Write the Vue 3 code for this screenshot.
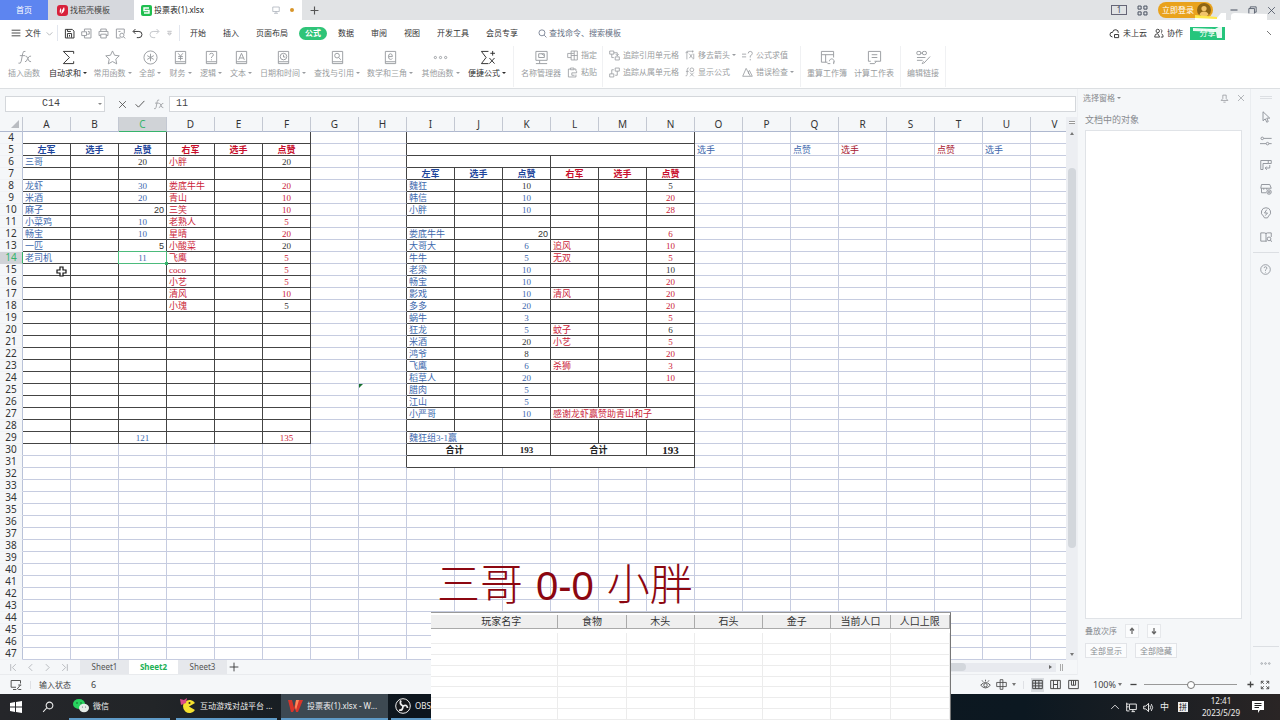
<script setup>
import { h, ref } from 'vue'

const shapes = {
  burger: 'M1 3.5H15M1 8H15M1 12.5H15',
  down: 'M3 6L8 11L13 6',
  up: 'M2 11L8 5L14 11',
  save: 'M2 2H12L14.500 4.500V14.500H2ZM5 14V8H11V14M5 2V5H10M8 10V12.500',
  exportPdf: 'M5 1.500H14.500V14.500H5M5 1.500V5M5 11V14.500M1 5.500H8V11H1ZM10 5H12V9H9',
  print: 'M4 5V1.500H12V5M4 11H1.500V5H14.500V11H12M4 9H12V14.500H4Z',
  preview: 'M13.500 8V1.500H2V14.500H8M10 7.500A3 3 0 1 0 10 13.500A3 3 0 1 0 10 7.500M12.300 12.800L15 15M5 5H8',
  undo: 'M5 1.500L1.500 5L5 8.500M2 5H10A4 4 0 0 1 10 14H7',
  redo: 'M11 1.500L14.500 5L11 8.500M14 5H6A4 4 0 0 0 6 14H9',
  more: 'M3 3H13M4 7L8 12L12 7Z',
  search: 'M7 1.500A5.300 5.300 0 1 0 7 12.100A5.300 5.300 0 1 0 7 1.500M11 11L15 15',
  searchLeft: 'M10 1.500A4.500 4.500 0 1 0 10 10.500A4.500 4.500 0 1 0 10 1.500M6.500 9L1.500 14.500',
  fx: 'M9 1.500Q6.500 .5 6 4L4.500 12Q4 15 1.500 14M3 6H8.500M9 6.500Q10.500 6 11.500 9Q12.500 13 15 12.500M15 6.500Q13 6 11.500 9Q10 13 8.500 12.500',
  sum: 'M13.500 4V1.500H2.500L9 8L2.500 14.500H13.500V12',
  star: 'M8 1L10.200 5.600L15.200 6.200L11.500 9.700L12.500 14.800L8 12.300L3.500 14.800L4.500 9.700L.8 6.200L5.800 5.600Z',
  all: 'M8 1A7 7 0 1 0 8 15A7 7 0 1 0 8 1M8 4V12M4.500 6L11.500 10M11.500 6L4.500 10',
  money: 'M2.500 1.500H13.500V14.500H2.500ZM2.500 12.500H13.500M5.500 3.500L8 6.500L10.500 3.500M8 6.500V11M5.500 7H10.500M5.500 9H10.500',
  logic: 'M2.500 1.500H13.500V14.500H2.500ZM2.500 12.500H13.500M6 5Q6 3.500 8 3.500T10 5Q10 6.500 8 7.500V8.500M8 10V11',
  textFn: 'M2.500 1.500H13.500V14.500H2.500ZM2.500 12.500H13.500M5 10.500L8 3.500L11 10.500M6 8.500H10',
  clock: 'M2.500 1.500H13.500V14.500H2.500ZM2.500 12.500H13.500M8 3.500A3.500 3.500 0 1 0 8 10.500A3.500 3.500 0 1 0 8 3.500M8 5V7.500H10',
  lookup: 'M2.500 1.500H13.500V14.500H2.500ZM2.500 12.500H13.500M7.500 3.500A2.500 2.500 0 1 0 7.500 8.500A2.500 2.500 0 1 0 7.500 3.500M9.300 8L11.500 10.500',
  math: 'M2.500 1.500H13.500V14.500H2.500ZM2.500 12.500H13.500M6 7H10Q10 4 8 4Q5.800 4 5.800 7T8 10Q9.500 10 10 9',
  dots: 'M2.500 6.800A1.200 1.200 0 1 0 2.500 9.200A1.200 1.200 0 1 0 2.500 6.800M8 6.800A1.200 1.200 0 1 0 8 9.200A1.200 1.200 0 1 0 8 6.800M13.500 6.800A1.200 1.200 0 1 0 13.500 9.200A1.200 1.200 0 1 0 13.500 6.800',
  quick: 'M9 1.500H1.500L6.500 8L1.500 14.500H9M11 3.500H16M13.500 1V6M10 8.500L15.500 14.500M15.500 8.500L10 14.500',
  manager: 'M2 1.500H14V11H2ZM5 4H11V8H5ZM2 14.500H14M6 11V14.500M8 4L11 6',
  assign: 'M1 5H6V14.500H15V1.500H6V5M6 8H15M10.500 1.500V14.500M1 5V11H6M6 5H10',
  paste: 'M5 3H2V14.500H13V11M5 1.500H10V4H5ZM10 3H13V6M7 8.500H14V6M7 8.500V12H11',
  precedent: 'M1 1.500H7V6H1ZM9 10H15V14.500H9ZM4 6V11H7M7 4H12V8M10 6L12 8.500L14 6',
  dependent: 'M9 1.500H15V6H9ZM1 10H7V14.500H1ZM12 6V12H9M4 10V4H7',
  removeArrow: 'M3 15V3M1 5L3 2.500L5 5M3 2H14M12 1V4M7 6L12 13M12 6L7 13M14 6V14H12',
  showFx: 'M6 1.500Q4 1 3.500 4V12Q3 15 1 14M1.500 7H6M11 1.500A3 3 0 1 0 11 7.500A3 3 0 1 0 11 1.500M8 9L14 15M14 9L8 15',
  evalFx: 'M0 6H6M0 10H6M9 5Q9 2 12 2T15 5Q15 7 12 8.500V11M12 13V15',
  warn: 'M6 2L1 13.500H15L10.500 4.500M6 2L12 13M9.500 6V10',
  recalc: 'M14.500 8V1.500H1.500V13H8M1.500 5H14.500M6 5V13M10 12A2.500 2.500 0 1 1 14.500 13.500M14.500 15L15 12M8 14.500H11',
  calcSheet: 'M4 12H1.500V1.500H14.500V12H8M5 5H11M5 8H11M3 14.500H8L10 12',
  editLink: 'M3 1.500A1.800 1.800 0 1 0 3 5A1.800 1.800 0 1 0 3 1.500M9 1.500A1.800 1.800 0 1 0 9 5A1.800 1.800 0 1 0 9 1.500M4.500 3.300H7.500M1 8H10M1 11H7M8 14.500L15 7M6.500 15L8 12',
  cloud: 'M5 13Q1 12.500 1.500 9T5 6.500Q6 2 10 2.500T13.500 7M8 9.500H14V14H8Z',
  people: 'M6 2A2.700 2.700 0 1 0 6 7.500A2.700 2.700 0 1 0 6 2M1 14.500Q1 9 6 9L9 14.500ZM11 2Q14 4 12 7.500M12 9Q15 11 14.500 14.500H11',
  close: 'M2 2L14 14M14 2L2 14',
  check: 'M1 8.500L5.500 13L15 3',
  plus: 'M8 1V15M1 8H15',
  minus: 'M1 8H15',
  restore: 'M4 4V1.500H14.500V11H12M1.500 4.500H11.500V14.500H1.500Z',
  pin: 'M5 2H11V8L14 11.500H2L5 8ZM6 14.500H10',
  pointer: 'M4 1L13 9.500H9L11 14L9 15L7 10.500L4 13Z',
  sliders: 'M5 4.500H15.500M3 2.800A1.700 1.700 0 1 0 3 6.200A1.700 1.700 0 1 0 3 2.800M0 11.500H8M10 9.800A1.700 1.700 0 1 0 10 13.200A1.700 1.700 0 1 0 10 9.800M12 11.500H15.500',
  route: 'M1 2H15V6H11M1 2V14H4V6H11V2M13 8V12H7M9 10L7 12L9 14.500',
  store: 'M2 2H13L15 7H1ZM2 7V13H8M5 7V9M9 7V9M12 9A3 3 0 1 0 12 15A3 3 0 1 0 12 9M12 10V14M10 12H14',
  bulb: 'M8 1A6 6 0 0 0 4.500 12L6 14.500H10L11.500 12A6 6 0 0 0 8 1M9 3.500L6 8H10L7 11.500',
  book: 'M8 3V14M1 2.500H6Q8 2.500 8 4Q8 2.500 10 2.500H15V8M1 2.500V13.500H9M12 8A2.500 2.500 0 1 0 12 13A2.500 2.500 0 1 0 12 8M14 12L15.500 14.500',
  help: 'M8 1A7 7 0 1 0 8 15A7 7 0 1 0 8 1M6 6Q6 4 8 4T10 6Q10 7.500 8 8.500V10M8 11.500V12.500',
  monitor: 'M1.500 2H14.500V11H1.500ZM4 14.500H12M8 11V14.500',
  left: 'M11 2L5 8L11 14',
  right: 'M5 2L11 8L5 14',
  first: 'M3 2V14M12 2L6 8L12 14',
  last: 'M13 2V14M4 2L10 8L4 14',
  screenFx: 'M14 6V2H1.500V11H8M4 14H8M9 14L14 8M11 8H15M11 14H15',
  eye: 'M1 9Q8 1 15 9Q8 17 1 9M8 6.500A2.500 2.500 0 1 0 8 11.500A2.500 2.500 0 1 0 8 6.500M8 1V3.500M3 2L4.500 4M13 2L11.500 4',
  cross: 'M1 5H15V11H1ZM6 1H10V15H6Z',
  normal: 'M1 2H15V14H1ZM1 6H15M1 10H15M5 2V14M10 2V14',
  page: 'M1 2H15V14H1ZM5 2V14M11 2V14M5 8H11',
  brk: 'M1 14V2H15V14H1M5 2V9H11V2M8 2V9',
  full: 'M6 2H2V6M2 2L6 6M10 2H14V6M14 2L10 6M6 14H2V10M2 14L6 10M10 14H14V10M14 14L10 10',
  arrowUp: 'M8 14V3M4 7L8 2.500L12 7',
  arrowDown: 'M8 2V13M4 9L8 13.500L12 9',
  network: 'M5 3H15V11H5ZM8 14H13M10 11V14M1 1V13M1 3H4M1 7H4M1 13H5',
  sound: 'M1 6H4L8 2V14L4 10H1ZM10 5Q12 8 10 11M12 3Q16 8 12 13',
  apps: 'M1.500 1.500H6V6H1.500ZM10 1.500H14.500V6H10ZM1.500 10H6V14.500H1.500ZM10 10H14.500V14.500H10Z'
}

const Icon = ({ name, size = 10, w = 1.4 }) =>
  h('svg', { width: size, height: size, viewBox: '0 0 16 16', fill: 'none', stroke: 'currentColor', 'stroke-width': w, 'aria-hidden': 'true' },
    [h('path', { d: shapes[name] })])
Icon.props = ['name', 'size', 'w']

const menus = ['开始', '插入', '页面布局', '公式', '数据', '审阅', '视图', '开发工具', '会员专享']
const quick = [['save', 'on'], ['exportPdf', ''], ['print', ''], ['preview', ''], ['undo', 'on'], ['redo', 'off']]
const functions = [
  ['fx', '插入函数', false], ['sum', '自动求和', true, 'on'], ['star', '常用函数', true], ['all', '全部', true],
  ['money', '财务', true], ['logic', '逻辑', true], ['textFn', '文本', true], ['clock', '日期和时间', true],
  ['lookup', '查找与引用', true], ['math', '数学和三角', true], ['dots', '其他函数', true], ['quick', '便捷公式', true, 'on']
]
const sideIcons = ['pointer', 'sliders', 'route', 'store', 'bulb', 'book']

const letters = 'ABCDEFGHIJKLMNOPQRSTUV'.split('')
const cells = {}
const put = (key, t, c = '') => { cells[key] = { t, c } }

function heads(row, start) {
  const i = letters.indexOf(start)
  ;['左军', '选手', '点赞', '右军', '选手', '点赞'].forEach((t, n) => put(letters[i + n] + row, t, n < 3 ? 'hb' : 'hr'))
}
heads(5, 'A')
heads(7, 'I')

// row, left name, left votes, right name, right votes; votes may carry a class after a colon
const left = [
  [6, '三哥', '20:ink', '小胖', '20:ink'], [8, '龙虾', '30', '娄底牛牛', '20'], [9, '米酒', '20', '青山', '10'],
  [10, '麻子', '20:num', '三笑', '10'], [11, '小菜鸡', '10', '老熟人', '5'], [12, '畅宝', '10', '星晴', '20'],
  [13, '一匹', '5:num', '小酸菜', '20:ink'], [14, '老司机', '11', '飞鹰', '5'], [15, '', '', 'coco', '5'],
  [16, '', '', '小艺', '5'], [17, '', '', '清风', '10'], [18, '', '', '小瑰', '5:ink'], [29, '', '121', '', '135']
]
const right = [
  [8, '魏狂', '10:ink', '', '5:ink'], [9, '韩信', '10', '', '20'], [10, '小胖', '10', '', '28'],
  [12, '娄底牛牛', '20:num', '', '6'], [13, '大哥大', '6', '追风', '10'], [14, '牛牛', '5', '无双', '5'],
  [15, '老梁', '10', '', '10:ink'], [16, '畅宝', '10', '', '20'], [17, '影戏', '10', '清风', '20'],
  [18, '多多', '20', '', '20'], [19, '蜗牛', '3', '', '5'], [20, '狂龙', '5', '蚊子', '6:ink'],
  [21, '米酒', '20:ink', '小艺', '5'], [22, '鸿爷', '8:ink', '', '20'], [23, '飞鹰', '6', '杀狮', '3'],
  [24, '稻草人', '20', '', '10'], [25, '腊肉', '5', '', ''], [26, '江山', '5', '', ''],
  [27, '小严哥', '10', '感谢龙虾赢赞助青山和子', ''], [29, '魏狂组3-1赢', '', '', '']
]
function fill(list, cols) {
  for (const [row, ...vals] of list) {
    vals.forEach((v, n) => {
      if (!v) return
      const [t, extra] = v.split(':')
      const tone = extra || (n < 2 ? 'blue' : 'red')
      put(cols[n] + row, t, n % 2 ? 'mid ' + tone : tone)
    })
  }
}
fill(left, ['A', 'C', 'D', 'F'])
fill(right, ['I', 'K', 'L', 'N'])
put('I30', '合计', 'tot'); put('K30', '193', 'tot'); put('L30', '合计', 'tot'); put('N30', '193', 'tot wide')
put('O5', '选手', 'sans blue'); put('Q5', '点赞', 'sans blue'); put('R5', '选手', 'sans dred')
put('T5', '点赞', 'sans dred'); put('U5', '选手', 'sans blue')

const spans = { A4: 3, D4: 3, I4: 6, I5: 6, I6: 3, L6: 3, L27: 3, I29: 2, I30: 2, L30: 2, I31: 6 }

const rows = []
for (let r = 4; r <= 47; r++) {
  const list = []
  for (let i = 0; i < letters.length;) {
    const key = letters[i] + r
    const span = spans[key] || 1
    const last = i + span - 1
    const inLeft = i <= 5 && r <= 29
    const inRight = i >= 8 && i <= 13 && r <= 31
    const cell = cells[key] || { t: '', c: '' }
    const edge = inLeft || inRight || (last === 7 && r <= 31)
    list.push({
      key, span, t: cell.t,
      c: [cell.c, edge ? 'er' : '', inLeft || inRight ? 'eb' : '']
    })
    i += span
  }
  rows.push({ r, list })
}

const players = ['玩家名字', '食物', '木头', '石头', '金子', '当前人口', '人口上限']
const zoom = ref(50)
const name = ref('C14')
const formula = ref('11')
</script>

<template>
  <div class="app">
    <header class="title">
      <button class="tab home">首页</button>
      <button class="tab docer">
        <svg width="11" height="11" viewBox="0 0 11 11"><rect width="11" height="11" rx="3" fill="#d8213b" /><path d="M3 8.500Q2 5 4 3Q5 6 3 8.500M4 9Q4.500 5 7 2Q9 6 4 9" fill="#fff" /></svg>
        找稻壳模板
      </button>
      <button class="tab file">
        <svg width="11" height="11" viewBox="0 0 11 11"><rect width="11" height="11" rx="2" fill="#1fbf4f" /><path d="M8 3H3V5.500H8V8H3" fill="none" stroke="#fff" stroke-width="1.400" /></svg>
        <span>投票表(1).xlsx</span>
        <Icon class="mon" name="monitor" size="8" />
        <i class="dot"></i>
      </button>
      <button class="add" aria-label="新建"><Icon name="plus" size="9" w="2" /></button>
      <div class="win">
        <span class="one">1</span>
        <Icon name="apps" size="11" />
        <button class="login">立即登录
          <svg width="14" height="14" viewBox="0 0 14 14"><circle cx="7" cy="7" r="7" fill="#8d6414" /><circle cx="7" cy="5.500" r="2.600" fill="#f2c46a" /><path d="M2.500 12Q3 8.500 7 8.500T11.500 12Q7 15 2.500 12" fill="#f2c46a" /></svg>
        </button>
        <button aria-label="最小化"><Icon name="minus" size="8" w="2" /></button>
        <button aria-label="还原"><Icon name="restore" size="9" /></button>
        <button aria-label="关闭"><Icon name="close" size="9" /></button>
      </div>
    </header>

    <nav class="menu">
      <button class="filebtn"><Icon name="burger" size="10" />文件<Icon class="pale" name="down" size="9" /></button>
      <div class="quick">
        <button v-for="q in quick" :key="q[0]" :class="q[1]" :aria-label="q[0]"><Icon :name="q[0]" size="11" /></button>
        <button aria-label="更多"><Icon name="more" size="7" /></button>
      </div>
      <div class="items">
        <button v-for="m in menus" :key="m" :class="{ active: m === '公式' }">{{ m }}</button>
      </div>
      <label class="find"><Icon name="search" size="9" /><input aria-label="查找" placeholder="查找命令、搜索模板" /></label>
      <div class="cloud">
        <button><Icon name="cloud" size="11" />未上云</button>
        <button><Icon name="people" size="10" />协作</button>
        <button class="share">分享</button>
      </div>
      <button class="fold" aria-label="折叠"><svg width="6" height="6" viewBox="0 0 6 6"><path d="M1 1L5 5" stroke="#777" /></svg></button>
      <svg class="flare" width="90" height="34" viewBox="0 0 90 34" aria-hidden="true">
        <path d="M5 4L27 5L31 0L36 0V9H5Z" fill="#fff" />
        <path d="M5 2L27 4L27 6L5 5Z" fill="#ffe84a" />
        <path d="M41 3Q41 0 45 0L77 1V9H41Z" fill="#fff" />
        <path d="M3 15L25 16L32 12V25H27L26 19L3 18Z" fill="#fff" opacity=".9" />
      </svg>
    </nav>

    <section class="ribbon">
      <div class="fns">
        <button v-for="f in functions" :key="f[1]" class="big" :class="f[3]">
          <Icon :name="f[0]" size="15" w="1" />
          <span :class="{ drop: f[2] }">{{ f[1] }}</span>
        </button>
      </div>
      <div class="grp names">
        <button class="big"><Icon name="manager" size="15" w="1" /><span>名称管理器</span></button>
        <div class="pair">
          <button><Icon name="assign" size="11" w="1.200" />指定</button>
          <button><Icon name="paste" size="11" w="1.200" />粘贴</button>
        </div>
      </div>
      <div class="grp trace">
        <div class="pair">
          <button><Icon name="precedent" size="11" w="1.200" />追踪引用单元格</button>
          <button><Icon name="dependent" size="11" w="1.200" />追踪从属单元格</button>
        </div>
        <div class="pair">
          <button><Icon name="removeArrow" size="10" w="1.200" /><span class="drop">移去箭头</span></button>
          <button><Icon name="showFx" size="10" w="1.200" />显示公式</button>
        </div>
        <div class="pair">
          <button><Icon name="evalFx" size="11" w="1.200" />公式求值</button>
          <button><Icon name="warn" size="11" w="1.200" /><span class="drop">错误检查</span></button>
        </div>
      </div>
      <div class="grp calc">
        <button class="big"><Icon name="recalc" size="15" w="1" /><span>重算工作簿</span></button>
        <button class="big"><Icon name="calcSheet" size="15" w="1" /><span>计算工作表</span></button>
      </div>
      <div class="grp link">
        <button class="big"><Icon name="editLink" size="15" w="1" /><span>编辑链接</span></button>
      </div>
    </section>

    <main class="body">
      <section class="work">
        <div class="fbar">
          <div class="namebox"><input v-model="name" aria-label="名称框" /><i></i></div>
          <div class="ops">
            <button aria-label="取消"><Icon name="close" size="9" /></button>
            <button aria-label="输入"><Icon name="check" size="10" /></button>
            <button class="pale" aria-label="函数"><Icon name="fx" size="11" /></button>
          </div>
          <input v-model="formula" class="formula" aria-label="编辑栏" />
        </div>
        <div class="sheet">
          <div class="view">
            <table class="grid">
              <colgroup><col class="rh" /><col v-for="l in letters" :key="l" /></colgroup>
              <thead>
                <tr><th class="corner"><i></i></th><th v-for="l in letters" :key="l" :class="{ sel: l === 'C' }">{{ l }}</th></tr>
              </thead>
              <tbody>
                <tr v-for="row in rows" :key="row.r">
                  <th :class="{ sel: row.r === 14 }">{{ row.r }}</th>
                  <td v-for="d in row.list" :key="d.key" :colspan="d.span" :class="d.c">
                    {{ d.t }}
                    <i v-if="d.key === 'C14'" class="pick"></i>
                    <i v-if="d.key === 'H25'" class="flag"></i>
                    <svg v-if="d.key === 'A15'" class="cur" width="11" height="11" viewBox="0 0 11 11"><path d="M4 1H7V4H10V7H7V10H4V7H1V4H4Z" fill="#fff" stroke="#111" stroke-width="1.200" /></svg>
                  </td>
                </tr>
              </tbody>
            </table>
          </div>
          <div class="vbar"><i class="split"></i><i class="tri up"></i><i class="thumb"></i><i class="tri dn"></i></div>
        </div>
        <div class="tabs">
          <div class="nav">
            <button aria-label="第一张"><Icon name="first" size="9" /></button>
            <button aria-label="上一张"><Icon name="left" size="9" /></button>
            <button aria-label="下一张"><Icon name="right" size="9" /></button>
            <button aria-label="最后一张"><Icon name="last" size="9" /></button>
          </div>
          <button class="st">Sheet1</button>
          <button class="st on">Sheet2</button>
          <button class="st">Sheet3</button>
          <button class="plus" aria-label="新建工作表"><Icon name="plus" size="10" /></button>
          <div class="hbar"><i></i><b></b></div>
          <i class="hsplit"></i>
        </div>
      </section>

      <aside class="pane">
        <div class="phead"><span class="drop">选择窗格</span><Icon class="r" name="pin" size="9" w="1.200" /><Icon name="close" size="8" w="1.200" /></div>
        <h2>文档中的对象</h2>
        <div class="objects"></div>
        <div class="order"><span>叠放次序</span><button aria-label="上移"><Icon name="arrowUp" size="8" w="2.500" /></button><button aria-label="下移"><Icon name="arrowDown" size="8" w="2.500" /></button></div>
        <div class="show"><button>全部显示</button><button>全部隐藏</button></div>
      </aside>

      <aside class="rail">
        <i class="grip"></i>
        <button v-for="s in sideIcons" :key="s" :aria-label="s"><Icon :name="s" size="12" w="1.200" /></button>
        <hr />
        <button class="hp" aria-label="帮助"><Icon name="help" size="11" w="1.200" /></button>
        <hr class="low" />
        <button aria-label="更多"><Icon name="dots" size="11" w="1" /></button>
      </aside>
    </main>

    <footer class="status">
      <Icon name="screenFx" size="12" w="1.200" />
      <i class="sep"></i>
      <span class="mode">输入状态</span><span class="count">6</span>
      <div class="tools">
        <Icon name="eye" size="11" w="1.200" />
        <Icon name="cross" size="11" w="1.200" /><i class="tri dn"></i>
        <i class="sep"></i>
        <button class="von" aria-label="普通视图"><Icon name="normal" size="11" /></button>
        <button aria-label="页面布局"><Icon name="page" size="11" /></button>
        <button aria-label="分页预览"><Icon name="brk" size="11" /></button>
        <div class="pct"><select aria-label="缩放"><option>100%</option></select><i class="tri dn"></i></div>
        <button class="zo" aria-label="缩小"><Icon name="minus" size="7" w="3" /></button>
        <input v-model="zoom" type="range" min="0" max="100" aria-label="缩放比例" />
        <button aria-label="放大"><Icon name="plus" size="7" w="3" /></button>
        <Icon name="full" size="10" />
      </div>
    </footer>

    <footer class="task">
      <button class="start" aria-label="开始"><svg width="12" height="12" viewBox="0 0 12 12" fill="#fff"><path d="M0 2L5 1V5.600H0ZM6 1L12 0V5.600H6ZM0 6.400H5V11L0 10ZM6 6.400H12V12L6 11Z" /></svg></button>
      <button class="start" aria-label="搜索"><Icon name="searchLeft" size="12" /></button>
      <button class="app-i wx">
        <svg width="16" height="14" viewBox="0 0 16 14"><ellipse cx="6" cy="5" rx="6" ry="5" fill="#28d45e" /><ellipse cx="11" cy="9" rx="5" ry="4.200" fill="#e6ede8" /><circle cx="4" cy="4" r=".8" fill="#175c2d" /><circle cx="8" cy="4" r=".8" fill="#175c2d" /><circle cx="9.500" cy="8" r=".6" fill="#667" /><circle cx="12.500" cy="8" r=".6" fill="#667" /></svg>
        微信
      </button>
      <button class="app-i">
        <svg width="16" height="16" viewBox="0 0 16 16"><path d="M15 5A6.500 6.500 0 1 0 15 12L9 8.500Z" fill="#f5e12f" /><circle cx="9.500" cy="5" r="1" fill="#222" /><path d="M0 1L4 2L7 0L6 5L1 7Z" fill="#d94a86" /></svg>
        互动游戏对战平台 ...
      </button>
      <button class="app-i on">
        <svg width="15" height="12" viewBox="0 0 15 12"><path d="M0 0H4L6 8L8 0H15L10 12H8L7 8L5 12H3Z" fill="#d8352a" /><path d="M8 0H11L8 10L7 7Z" fill="#ff8a5c" /></svg>
        投票表(1).xlsx - W...
      </button>
      <button class="app-i">
        <svg width="16" height="16" viewBox="0 0 16 16" fill="none" stroke="#eee"><circle cx="8" cy="8" r="7.300" fill="#16181b" /><path d="M8 8Q4 6 6 2.500M8 8Q12 6 12.500 10M8 8Q8 13 4 12" stroke-width="1.800" /></svg>
        OBS
      </button>
      <div class="tray">
        <Icon name="up" size="10" />
        <Icon name="network" size="11" />
        <Icon name="sound" size="11" />
        <span class="zh">中</span>
        <span class="ime">拼</span>
        <time>12:41<br />2023/5/29</time>
        <svg width="12" height="12" viewBox="0 0 12 12"><path d="M0 0H12V9H8L6 12V9H0Z" fill="#fff" /><path d="M2.500 2.500H9.500M2.500 4.500H9.500M2.500 6.500H7" stroke="#222" /></svg>
      </div>
    </footer>

    <section class="overlay">
      <p class="score"><span>三哥</span><b>0-0</b><span>小胖</span></p>
      <table class="players">
        <colgroup><col class="c1" /><col class="c2" /><col class="c2" /><col class="c2" /><col class="c2" /><col class="c3" /><col class="c3" /></colgroup>
        <thead><tr><th v-for="p in players" :key="p"><span>{{ p }}</span></th></tr></thead>
        <tbody><tr v-for="n in 8" :key="n"><td v-for="p in players" :key="p"></td></tr></tbody>
      </table>
    </section>
  </div>
</template>

<style>
html, body { margin: 0; height: 100%; overflow: hidden; }
</style>

<style scoped>
.app { position: relative; display: flex; flex-direction: column; height: 100vh; overflow: hidden; background: #f5f7f9; color: #333; font: 8px/12px "Noto Sans", "Noto Sans CJK SC", sans-serif; }
button, input, select { font: inherit; color: inherit; background: none; border: 0; padding: 0; margin: 0; outline: 0; min-width: 0; }
button { display: flex; align-items: center; white-space: nowrap; }
svg { display: block; flex: none; }
i { font-style: normal; }
.drop::after { content: ""; display: inline-block; margin-left: 2px; vertical-align: 2px; border: 2px solid transparent; border-top-color: currentColor; border-bottom: 0; }
.pale { color: #a5a8ac; }
.tri { width: 0; height: 0; border: 2px solid transparent; }
.tri.up { border-bottom: 3px solid #777; border-top: 0; }
.tri.dn { border-top: 3px solid #777; border-bottom: 0; }

.title { display: flex; height: 20px; flex: none; background: #e1e3e5; }
.tab { height: 20px; gap: 2px; }
.home { width: 48px; justify-content: center; background: #5d85f0; color: #fff; }
.docer { width: 86px; padding-left: 9px; background: #d6d8dd; color: #444; }
.file { width: 168px; padding: 0 8px 0 7px; background: #fff; color: #222; }
.mon { margin-left: auto; color: #a4aab4; }
.dot { width: 4px; height: 4px; margin-left: 8px; border-radius: 50%; background: #d8952a; }
.add { width: 24px; justify-content: center; color: #555; }
.win { display: flex; align-items: center; gap: 10px; margin-left: auto; padding-right: 4px; color: #444c5c; }
.one { width: 14px; line-height: 8px; text-align: center; border: 1px solid #667; }
.login { height: 16px; gap: 3px; padding: 0 2px 0 4px; margin-right: 7px; border-radius: 8px; background: #e9a21c; color: #fff; }

.menu { position: relative; display: flex; align-items: center; height: 26px; flex: none; background: #fff; }
.filebtn { width: 58px; flex: none; padding-left: 11px; gap: 4px; color: #333; }
.quick { display: flex; align-items: center; gap: 6px; height: 16px; margin-left: -1px; padding: 0 6px; border: 1px solid #e2e6ee; border-width: 0 1px; color: #9a9da2; }
.quick .on { color: #333; }
.quick .off { color: #c2c5c9; }
.items { display: flex; gap: 5px; padding-left: 4px; }
.items button { height: 13px; padding: 0 6px; border-radius: 7px; }
.items .active { background: #2fc478; color: #fff; font-weight: 700; }
.find { display: flex; align-items: center; gap: 2px; margin-left: 14px; color: #667084; }
.find input { width: 90px; }
.find input::placeholder { color: #667084; opacity: 1; }
.cloud { display: flex; align-items: center; gap: 7px; margin-left: auto; margin-right: 41px; }
.cloud button { gap: 3px; }
.cloud .share { width: 35px; height: 13px; justify-content: center; background: #25c57c; color: #fff; }
.fold { margin-right: 8px; }
.flare { position: absolute; right: 0; top: -7px; }

.ribbon { display: flex; height: 42px; flex: none; background: #fff; border-bottom: 1px solid #dcdfe2; color: #999ca0; }
.fns { display: grid; grid-template-columns: 44px 44px 45px 30px 31px 30px 30px 54px 54px 52px 49px 44px; padding-left: 2px; }
.big { flex-direction: column; justify-content: flex-start; gap: 2px; padding-top: 4px; }
.big.on { color: #2b2b2b; }
.grp { display: flex; height: 41px; border-left: 1px solid #f0f1f3; }
.names { margin-left: 4px; padding-left: 7px; gap: 6px; }
.names .pair { width: 35px; }
.trace { padding-left: 6px; gap: 6px; }
.pair { display: flex; flex-direction: column; gap: 5px; padding-top: 3px; }
.pair button { gap: 3px; height: 12px; }
.names .big { width: 40px; }
.calc { margin-left: 6px; padding: 0 6px; gap: 7px; }
.calc .big { width: 40px; }
.link { padding: 0 6px; border-right: 1px solid #f0f1f3; }

.body { display: flex; flex: 1; min-height: 0; }
.work { display: flex; flex-direction: column; flex: 1; min-width: 0; }
.fbar { display: flex; height: 16px; flex: none; padding: 7px 1px 5px 5px; font: 10px/14px "Liberation Mono", monospace; color: #444; }
.namebox { position: relative; width: 100px; box-sizing: border-box; border: 1px solid #d4d7db; background: #fff; }
.namebox input { width: 90px; height: 14px; display: block; text-align: center; }
.namebox i { position: absolute; right: 2px; top: 6px; border: 2px solid transparent; border-top-color: #888; }
.ops { display: flex; gap: 8px; align-items: center; width: 64px; padding-left: 13px; box-sizing: border-box; }
.formula { flex: 1; border: 1px solid #d4d7db; background: #fff; padding-left: 6px; }
.sheet { display: flex; flex: 1; min-height: 0; }
.view { flex: 1; min-width: 0; overflow: hidden; background: #fff; }
.grid { width: 1079px; table-layout: fixed; border-spacing: 0; border-collapse: separate; }
.grid col { width: 48px; }
.grid col.rh { width: 23px; }
.grid th, .grid td { box-sizing: border-box; height: 12px; padding: 0; line-height: 11px; border: 0 solid #c6cce0; border-width: 0 1px 1px 0; white-space: nowrap; }
.grid th { font-size: 10px; font-weight: 400; color: #333; background: #f5f7f9; }
.grid thead th { height: 15px; border-color: #c3c8d2; border-bottom-color: #aeb8cf; }
.grid tbody th { border-color: #b9c2d8; border-bottom-color: #f0f2f5; }
.grid thead .sel { background: #d0d3d7; color: #35b36b; border-bottom-color: #35b36b; }
.grid tbody .sel { background: #d0d3d7; color: #35b36b; border-bottom-color: #d0d3d7; border-right-color: #35b36b; }
.grid .corner i { display: block; width: 0; margin-left: 11px; border: 4px solid #b9bcc1; border-top-color: transparent; border-left-color: transparent; }
.grid td { position: relative; padding: 1px 0 0 2px; font: 9px/10px "Liberation Serif", "Noto Sans CJK SC", serif; }
.grid td.mid, .grid td.hb, .grid td.hr, .grid td.tot { padding-left: 0; text-align: center; }
.grid td.er { border-right-color: #444; }
.grid td.eb { border-bottom-color: #444; }
.grid .blue { color: #3d68ad; }
.grid .red { color: #cb1c38; }
.grid .dred { color: #a82030; }
.grid .hb { color: #1f479c; font-weight: 700; }
.grid .hr { color: #c80f2c; font-weight: 700; }
.grid .tot { font-weight: 700; color: #222; }
.grid td.wide { font-size: 11px; }
.grid td.num { padding-right: 2px; text-align: right; font-family: "Liberation Sans", sans-serif; color: #333; }
.grid td.sans { font-family: "Noto Sans CJK SC", sans-serif; }
.pick { position: absolute; inset: -1px; z-index: 1; border: 1px solid #4cba7b; }
.pick::after { content: ""; position: absolute; right: -2px; bottom: -2px; width: 3px; height: 3px; background: #35b36b; }
.flag { position: absolute; left: 0; top: 0; border: 2px solid #17702f; border-right-color: transparent; border-bottom-color: transparent; }
.cur { position: absolute; left: 33px; top: 2px; z-index: 2; }
.vbar { display: flex; flex-direction: column; align-items: center; width: 11px; background: #eceef2; }
.vbar .split { width: 6px; height: 1px; margin: 4px 0 8px; border: 1px solid #999; border-width: 1px 0; background: #fff; }
.vbar .thumb { width: 8px; height: 380px; margin-top: 33px; border-radius: 4px; background: #d3d7dc; }
.vbar .dn { margin-top: auto; margin-bottom: 4px; }
.tabs { display: flex; align-items: center; height: 15px; flex: none; color: #555; border-bottom: 1px solid #e9ebee; box-sizing: border-box; }
.nav { display: flex; gap: 8px; width: 80px; padding-left: 9px; box-sizing: border-box; color: #a8abb0; }
.st { width: 49px; height: 14px; justify-content: center; background: #e6e8ec; }
.st.on { background: #fff; color: #22b055; font-weight: 700; }
.plus { padding-left: 2px; color: #333; }
.hbar { display: flex; align-items: center; width: 600px; max-width: 60%; height: 9px; margin-left: auto; background: #e8eaef; justify-content: flex-end; }
.hbar i { flex: 1; height: 8px; border-radius: 4px; background: #d3d7dc; }
.hbar b { width: 0; margin: 0 4px 0 83px; border: 2px solid transparent; border-left: 3px solid #666; border-right: 0; }
.hsplit { width: 1px; height: 7px; margin: 0 14px 0 4px; border: 1px solid #aaa; border-width: 0 1px; }

.pane { display: flex; flex-direction: column; width: 174px; flex: none; box-sizing: border-box; padding: 3px 8px 17px 7px; border-left: 1px solid #eef0f3; border-right: 1px solid #eaedf0; color: #888b90; }
.phead { display: flex; align-items: center; gap: 8px; margin: 0 -3px 0 -2px; }
.phead .r { margin-left: auto; }
.pane h2 { margin: 10px 0 4px; font: inherit; font-size: 9px; }
.objects { flex: 1; border: 1px solid #e0e3e7; background: #fff; }
.order { display: flex; align-items: center; gap: 8px; margin: 5px 0; }
.order button { width: 14px; height: 14px; justify-content: center; border: 1px solid #e6e8eb; box-sizing: border-box; background: #fbfcfd; color: #666; }
.show { display: flex; gap: 8px; }
.show button { width: 42px; height: 15px; justify-content: center; border: 1px solid #e2e4e8; box-sizing: border-box; background: #fbfcfd; }
.rail { display: flex; flex-direction: column; align-items: center; width: 29px; flex: none; color: #8b8f96; }
.grip { width: 12px; height: 1px; margin: 7px 0 6px; border: 1px solid #dcdfe3; border-width: 1px 0; }
.rail button { height: 24px; }
.rail hr { width: 26px; margin: 3px 0 4px; border: 0; border-top: 1px solid #dcdfe3; }
.rail hr.low { margin-top: auto; }

.status { display: flex; align-items: center; height: 19px; flex: none; padding: 0 10px; color: #444; }
.sep { width: 1px; height: 8px; margin: 0 8px; background: #dfe1e5; }
.mode { width: 52px; }
.count { font-size: 9px; }
.tools { display: flex; align-items: center; gap: 5px; margin-left: auto; }
.tools .sep { margin: 0 2px; }
.tools button { height: 14px; padding: 0 1px; }
.tools .von { background: #d9dce0; }
.pct { display: flex; align-items: center; gap: 1px; margin-left: 8px; }
.tools select { width: 24px; appearance: none; font-size: 9px; }
.tools .zo { margin-left: 2px; }
.tools input { width: 93px; height: 9px; margin: 0 4px 0 1px; appearance: none; background: linear-gradient(#999, #999) center / 100% 1px no-repeat; }
.tools input::-webkit-slider-thumb { appearance: none; width: 8px; height: 8px; border: 1px solid #777; border-radius: 50%; background: #fff; }

.task { display: flex; align-items: stretch; height: 26px; flex: none; background: linear-gradient(90deg, #25262a 0, #222528 12%, #0d161e 32%, #0c1821 80%, #2a2525 100%); color: #eee; }
.start { width: 32px; justify-content: center; }
.app-i { width: 101px; margin-right: 6px; padding-left: 4px; gap: 4px; box-sizing: border-box; border-bottom: 2px solid #5f9bc8; }
.wx { margin-left: 5px; }
.app-i.on { width: 107px; margin: 0 3px 0 -2px; padding-left: 7px; background: #3d4952; }
.tray { display: flex; align-items: center; gap: 6px; margin-left: auto; padding-right: 16px; }
.zh { font-size: 9px; }
.ime { margin: 0 8px 0 3px; padding: 0 1px; line-height: 10px; background: #eee; color: #222; }
.tray time { text-align: center; margin-right: 6px; }

.overlay { position: absolute; left: 431px; bottom: 0; width: 520px; }
.score { display: flex; align-items: baseline; gap: 13px; margin: 0; padding: 3px 0 0 6px; height: 52px; color: #8c0710; font: 43px/52px "Liberation Serif", "Noto Sans CJK SC", serif; font-weight: 300; }
.score b { font: 40px/52px "Liberation Sans", sans-serif; }
.players { width: 100%; height: 108px; table-layout: fixed; border-spacing: 0; background: #fff; border-right: 1px solid #777; border-top: 1px solid #999; font: 10px/14px "Noto Sans CJK SC", sans-serif; color: #333; }
.c1 { width: 127px; }
.c2 { width: 68px; }
.c3 { width: 59px; }
.players th { height: 17px; padding: 0 0 3px; font-weight: 400; }
.players th span { display: block; background: #efefef; border-right: 1px solid #aaa; border-bottom: 1px solid #aaa; height: 13px; line-height: 12px; }
.players th:first-child span { padding-left: 14px; }
.players td { padding: 0; border-right: 1px solid #ececec; border-bottom: 1px solid #ececec; }
</style>
